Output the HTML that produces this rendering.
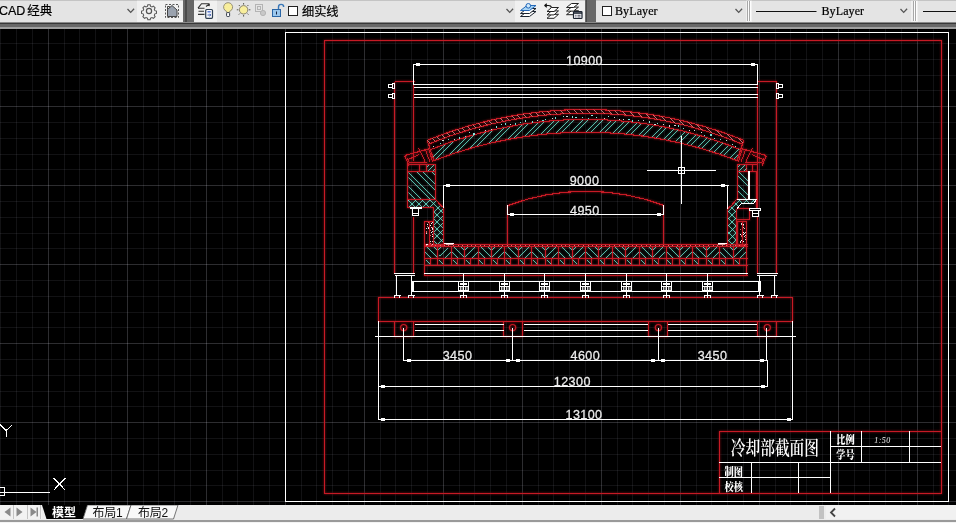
<!DOCTYPE html>
<html lang="zh"><head><meta charset="utf-8"><title>AutoCAD</title>
<style>
html,body{margin:0;padding:0;background:#000;}
body{width:956px;height:523px;position:relative;overflow:hidden;font-family:"Liberation Sans","Noto Sans CJK SC",sans-serif;font-size:12px;color:#111;}
#top{will-change:transform;position:absolute;left:0;top:0;width:956px;height:29px;background:#686868;}
#top .band1{position:absolute;left:0;top:22px;width:100%;height:1px;background:#383838;border-top:0.500px solid #8a8a8a;margin-top:-0.500px}
.gl{position:absolute;top:0;width:1.500px;height:22px;background:#4a4a4a;}
#top .band2{position:absolute;left:0;top:27px;width:100%;height:2px;background:#a0a0a0;}
.tb{position:absolute;top:0;height:22px;background:#f0f0f0;border-top:1px solid #d0d0d0;box-sizing:border-box;}
.combo{position:absolute;top:0;height:22px;background:#e4e4e4;box-sizing:border-box;border-top:1px solid #c4c4c4;}
.combo span{position:absolute;top:2px;white-space:nowrap;line-height:16px;color:#000;-webkit-text-stroke:0.2px #000;}
.mono{font-family:"Liberation Serif","Noto Serif CJK SC",serif;font-size:12px;letter-spacing:0.1px;color:#000;-webkit-text-stroke:0.25px #000;}
.chev{position:absolute;top:7px;width:8px;height:6px;}
svg.ic{position:absolute;top:0;left:0;}
#cv{position:absolute;left:0;top:0;will-change:transform;}
#cv text{font-family:"Liberation Sans",sans-serif;letter-spacing:0.4px;}
#bot{will-change:transform;position:absolute;left:0;top:505px;width:956px;height:18px;background:#ececec;}
#bot .ln{position:absolute;left:0;top:14.500px;width:100%;height:2px;background:#9a9a9a;}
#bot .ln2{position:absolute;left:0;top:16.500px;width:100%;height:2px;background:#f4f4f4;}
.tab{position:absolute;top:1px;height:14px;font-size:12px;line-height:14px;white-space:nowrap;}
</style></head><body>
<svg id="cv" width="956" height="523" viewBox="0 0 956 523" shape-rendering="crispEdges">
<defs><filter id="bl" x="0" y="0" width="100%" height="100%" filterUnits="userSpaceOnUse" color-interpolation-filters="sRGB"><feGaussianBlur in="SourceGraphic" stdDeviation="0.85" result="b"/><feColorMatrix in="b" type="matrix" values="0.75 0 0 0 0  0 0.55 0 0 0  0 0 0.55 0 0  0 0 0 1.15 0" result="b2"/><feMerge><feMergeNode in="b2"/><feMergeNode in="SourceGraphic"/></feMerge></filter></defs>
<rect x="0" y="29" width="956" height="476" fill="#000"/>
<rect x="0" y="29" width="1" height="476" fill="rgba(235,235,255,0.078)"/>
<rect x="16" y="29" width="1" height="476" fill="rgba(235,235,255,0.078)"/>
<rect x="32" y="29" width="1" height="476" fill="rgba(235,235,255,0.078)"/>
<rect x="48" y="29" width="1" height="476" fill="rgba(240,240,255,0.19)"/>
<rect x="64" y="29" width="1" height="476" fill="rgba(235,235,255,0.078)"/>
<rect x="79" y="29" width="1" height="476" fill="rgba(235,235,255,0.078)"/>
<rect x="95" y="29" width="1" height="476" fill="rgba(235,235,255,0.078)"/>
<rect x="111" y="29" width="1" height="476" fill="rgba(235,235,255,0.078)"/>
<rect x="127" y="29" width="1" height="476" fill="rgba(240,240,255,0.19)"/>
<rect x="143" y="29" width="1" height="476" fill="rgba(235,235,255,0.078)"/>
<rect x="158" y="29" width="1" height="476" fill="rgba(235,235,255,0.078)"/>
<rect x="174" y="29" width="1" height="476" fill="rgba(235,235,255,0.078)"/>
<rect x="190" y="29" width="1" height="476" fill="rgba(235,235,255,0.078)"/>
<rect x="206" y="29" width="1" height="476" fill="rgba(240,240,255,0.19)"/>
<rect x="222" y="29" width="1" height="476" fill="rgba(235,235,255,0.078)"/>
<rect x="237" y="29" width="1" height="476" fill="rgba(235,235,255,0.078)"/>
<rect x="253" y="29" width="1" height="476" fill="rgba(235,235,255,0.078)"/>
<rect x="269" y="29" width="1" height="476" fill="rgba(235,235,255,0.078)"/>
<rect x="285" y="29" width="1" height="476" fill="rgba(240,240,255,0.19)"/>
<rect x="301" y="29" width="1" height="476" fill="rgba(235,235,255,0.078)"/>
<rect x="316" y="29" width="1" height="476" fill="rgba(235,235,255,0.078)"/>
<rect x="332" y="29" width="1" height="476" fill="rgba(235,235,255,0.078)"/>
<rect x="348" y="29" width="1" height="476" fill="rgba(235,235,255,0.078)"/>
<rect x="364" y="29" width="1" height="476" fill="rgba(240,240,255,0.19)"/>
<rect x="380" y="29" width="1" height="476" fill="rgba(235,235,255,0.078)"/>
<rect x="395" y="29" width="1" height="476" fill="rgba(235,235,255,0.078)"/>
<rect x="411" y="29" width="1" height="476" fill="rgba(235,235,255,0.078)"/>
<rect x="427" y="29" width="1" height="476" fill="rgba(235,235,255,0.078)"/>
<rect x="443" y="29" width="1" height="476" fill="rgba(240,240,255,0.19)"/>
<rect x="459" y="29" width="1" height="476" fill="rgba(235,235,255,0.078)"/>
<rect x="474" y="29" width="1" height="476" fill="rgba(235,235,255,0.078)"/>
<rect x="490" y="29" width="1" height="476" fill="rgba(235,235,255,0.078)"/>
<rect x="506" y="29" width="1" height="476" fill="rgba(235,235,255,0.078)"/>
<rect x="522" y="29" width="1" height="476" fill="rgba(240,240,255,0.19)"/>
<rect x="538" y="29" width="1" height="476" fill="rgba(235,235,255,0.078)"/>
<rect x="553" y="29" width="1" height="476" fill="rgba(235,235,255,0.078)"/>
<rect x="569" y="29" width="1" height="476" fill="rgba(235,235,255,0.078)"/>
<rect x="585" y="29" width="1" height="476" fill="rgba(235,235,255,0.078)"/>
<rect x="601" y="29" width="1" height="476" fill="rgba(240,240,255,0.19)"/>
<rect x="617" y="29" width="1" height="476" fill="rgba(235,235,255,0.078)"/>
<rect x="632" y="29" width="1" height="476" fill="rgba(235,235,255,0.078)"/>
<rect x="648" y="29" width="1" height="476" fill="rgba(235,235,255,0.078)"/>
<rect x="664" y="29" width="1" height="476" fill="rgba(235,235,255,0.078)"/>
<rect x="680" y="29" width="1" height="476" fill="rgba(240,240,255,0.19)"/>
<rect x="696" y="29" width="1" height="476" fill="rgba(235,235,255,0.078)"/>
<rect x="711" y="29" width="1" height="476" fill="rgba(235,235,255,0.078)"/>
<rect x="727" y="29" width="1" height="476" fill="rgba(235,235,255,0.078)"/>
<rect x="743" y="29" width="1" height="476" fill="rgba(235,235,255,0.078)"/>
<rect x="759" y="29" width="1" height="476" fill="rgba(240,240,255,0.19)"/>
<rect x="775" y="29" width="1" height="476" fill="rgba(235,235,255,0.078)"/>
<rect x="790" y="29" width="1" height="476" fill="rgba(235,235,255,0.078)"/>
<rect x="806" y="29" width="1" height="476" fill="rgba(235,235,255,0.078)"/>
<rect x="822" y="29" width="1" height="476" fill="rgba(235,235,255,0.078)"/>
<rect x="838" y="29" width="1" height="476" fill="rgba(240,240,255,0.19)"/>
<rect x="854" y="29" width="1" height="476" fill="rgba(235,235,255,0.078)"/>
<rect x="869" y="29" width="1" height="476" fill="rgba(235,235,255,0.078)"/>
<rect x="885" y="29" width="1" height="476" fill="rgba(235,235,255,0.078)"/>
<rect x="901" y="29" width="1" height="476" fill="rgba(235,235,255,0.078)"/>
<rect x="917" y="29" width="1" height="476" fill="rgba(240,240,255,0.19)"/>
<rect x="933" y="29" width="1" height="476" fill="rgba(235,235,255,0.078)"/>
<rect x="948" y="29" width="1" height="476" fill="rgba(235,235,255,0.078)"/>
<rect x="0" y="43" width="956" height="1" fill="rgba(235,235,255,0.078)"/>
<rect x="0" y="59" width="956" height="1" fill="rgba(235,235,255,0.078)"/>
<rect x="0" y="75" width="956" height="1" fill="rgba(235,235,255,0.078)"/>
<rect x="0" y="90" width="956" height="1" fill="rgba(235,235,255,0.078)"/>
<rect x="0" y="106" width="956" height="1" fill="rgba(240,240,255,0.19)"/>
<rect x="0" y="122" width="956" height="1" fill="rgba(235,235,255,0.078)"/>
<rect x="0" y="138" width="956" height="1" fill="rgba(235,235,255,0.078)"/>
<rect x="0" y="154" width="956" height="1" fill="rgba(235,235,255,0.078)"/>
<rect x="0" y="169" width="956" height="1" fill="rgba(235,235,255,0.078)"/>
<rect x="0" y="185" width="956" height="1" fill="rgba(240,240,255,0.19)"/>
<rect x="0" y="201" width="956" height="1" fill="rgba(235,235,255,0.078)"/>
<rect x="0" y="217" width="956" height="1" fill="rgba(235,235,255,0.078)"/>
<rect x="0" y="233" width="956" height="1" fill="rgba(235,235,255,0.078)"/>
<rect x="0" y="248" width="956" height="1" fill="rgba(235,235,255,0.078)"/>
<rect x="0" y="264" width="956" height="1" fill="rgba(240,240,255,0.19)"/>
<rect x="0" y="280" width="956" height="1" fill="rgba(235,235,255,0.078)"/>
<rect x="0" y="296" width="956" height="1" fill="rgba(235,235,255,0.078)"/>
<rect x="0" y="312" width="956" height="1" fill="rgba(235,235,255,0.078)"/>
<rect x="0" y="327" width="956" height="1" fill="rgba(235,235,255,0.078)"/>
<rect x="0" y="343" width="956" height="1" fill="rgba(240,240,255,0.19)"/>
<rect x="0" y="359" width="956" height="1" fill="rgba(235,235,255,0.078)"/>
<rect x="0" y="375" width="956" height="1" fill="rgba(235,235,255,0.078)"/>
<rect x="0" y="391" width="956" height="1" fill="rgba(235,235,255,0.078)"/>
<rect x="0" y="406" width="956" height="1" fill="rgba(235,235,255,0.078)"/>
<rect x="0" y="422" width="956" height="1" fill="rgba(240,240,255,0.19)"/>
<rect x="0" y="438" width="956" height="1" fill="rgba(235,235,255,0.078)"/>
<rect x="0" y="454" width="956" height="1" fill="rgba(235,235,255,0.078)"/>
<rect x="0" y="470" width="956" height="1" fill="rgba(235,235,255,0.078)"/>
<rect x="0" y="485" width="956" height="1" fill="rgba(235,235,255,0.078)"/>
<rect x="0" y="501" width="956" height="1" fill="rgba(240,240,255,0.19)"/>
<g filter="url(#bl)">
<rect x="324.5" y="40.5" width="617.0" height="453.0" stroke="#c61a25" fill="none" stroke-width="1"/>
<line x1="394.50" y1="81.50" x2="394.50" y2="273.50" stroke="#c61a25" stroke-width="1" />
<line x1="413.50" y1="84.00" x2="413.50" y2="161.00" stroke="#c61a25" stroke-width="1" />
<line x1="413.50" y1="216.50" x2="413.50" y2="273.50" stroke="#c61a25" stroke-width="1" />
<line x1="394.60" y1="81.50" x2="414.60" y2="81.50" stroke="#c61a25" stroke-width="1" />
<line x1="776.50" y1="81.50" x2="776.50" y2="273.50" stroke="#c61a25" stroke-width="1" />
<line x1="757.50" y1="84.00" x2="757.50" y2="161.00" stroke="#c61a25" stroke-width="1" />
<line x1="757.50" y1="216.50" x2="757.50" y2="273.50" stroke="#c61a25" stroke-width="1" />
<line x1="757.40" y1="81.50" x2="777.40" y2="81.50" stroke="#c61a25" stroke-width="1" />
<g clip-path="url(#ca)" stroke="#69e8d4" stroke-width="0.78"><line x1="410.5" y1="170" x2="480.5" y2="100"/><line x1="419.8" y1="170" x2="489.8" y2="100"/><line x1="424.7" y1="170" x2="494.7" y2="100"/><line x1="434.0" y1="170" x2="504.0" y2="100"/><line x1="438.9" y1="170" x2="508.9" y2="100"/><line x1="448.2" y1="170" x2="518.2" y2="100"/><line x1="453.1" y1="170" x2="523.1" y2="100"/><line x1="462.4" y1="170" x2="532.4" y2="100"/><line x1="467.3" y1="170" x2="537.3" y2="100"/><line x1="476.6" y1="170" x2="546.6" y2="100"/><line x1="481.5" y1="170" x2="551.5" y2="100"/><line x1="490.8" y1="170" x2="560.8" y2="100"/><line x1="495.7" y1="170" x2="565.7" y2="100"/><line x1="505.0" y1="170" x2="575.0" y2="100"/><line x1="509.9" y1="170" x2="579.9" y2="100"/><line x1="519.2" y1="170" x2="589.2" y2="100"/><line x1="524.1" y1="170" x2="594.1" y2="100"/><line x1="533.4" y1="170" x2="603.4" y2="100"/><line x1="538.3" y1="170" x2="608.3" y2="100"/><line x1="547.6" y1="170" x2="617.6" y2="100"/><line x1="552.5" y1="170" x2="622.5" y2="100"/><line x1="561.8" y1="170" x2="631.8" y2="100"/><line x1="566.7" y1="170" x2="636.7" y2="100"/><line x1="576.0" y1="170" x2="646.0" y2="100"/><line x1="580.9" y1="170" x2="650.9" y2="100"/><line x1="590.2" y1="170" x2="660.2" y2="100"/><line x1="595.1" y1="170" x2="665.1" y2="100"/><line x1="604.4" y1="170" x2="674.4" y2="100"/><line x1="609.3" y1="170" x2="679.3" y2="100"/><line x1="618.6" y1="170" x2="688.6" y2="100"/><line x1="623.5" y1="170" x2="693.5" y2="100"/><line x1="632.8" y1="170" x2="702.8" y2="100"/><line x1="637.7" y1="170" x2="707.7" y2="100"/><line x1="647.0" y1="170" x2="717.0" y2="100"/><line x1="651.9" y1="170" x2="721.9" y2="100"/><line x1="661.2" y1="170" x2="731.2" y2="100"/><line x1="666.1" y1="170" x2="736.1" y2="100"/><line x1="675.4" y1="170" x2="745.4" y2="100"/><line x1="680.3" y1="170" x2="750.3" y2="100"/><line x1="689.6" y1="170" x2="759.6" y2="100"/><line x1="694.5" y1="170" x2="764.5" y2="100"/><line x1="703.8" y1="170" x2="773.8" y2="100"/><line x1="708.7" y1="170" x2="778.7" y2="100"/><line x1="718.0" y1="170" x2="788.0" y2="100"/><line x1="722.9" y1="170" x2="792.9" y2="100"/><line x1="732.2" y1="170" x2="802.2" y2="100"/><line x1="737.1" y1="170" x2="807.1" y2="100"/><line x1="746.4" y1="170" x2="816.4" y2="100"/><line x1="751.3" y1="170" x2="821.3" y2="100"/></g>
<path d="M427.10 140.30 A422.7 422.7 0 0 1 743.90 140.30" stroke="#c61a25" fill="none" stroke-width="1.1"/>
<path d="M428.50 144.10 A414.3 414.3 0 0 1 742.50 144.10" stroke="#c61a25" fill="none" stroke-width="1.1"/>
<path d="M430.30 149.70 A412.6 412.6 0 0 1 740.70 149.70" stroke="#c61a25" fill="none" stroke-width="1.1"/>
<path d="M434.00 160.60 A418.3 418.3 0 0 1 737.00 160.60" stroke="#c61a25" fill="none" stroke-width="1.1"/>
<path d="M427.10 140.30 L428.50 144.10 L430.30 149.70 L434.00 160.60" stroke="#c61a25" fill="none" stroke-width="1.1"/>
<path d="M743.90 140.30 L742.50 144.10 L740.70 149.70 L737.00 160.60" stroke="#c61a25" fill="none" stroke-width="1.1"/>
<path d="M404.60 155.60 L430.00 148.40" stroke="#c61a25" fill="none" stroke-width="1.1"/>
<path d="M404.60 155.60 L408.90 165.60" stroke="#c61a25" fill="none" stroke-width="1.1"/>
<path d="M407.00 158.20 L409.40 162.70" stroke="#c61a25" fill="none" stroke-width="1"/>
<path d="M408.30 159.50 L419.00 154.50" stroke="#c61a25" fill="none" stroke-width="1"/>
<line x1="409.40" y1="162.50" x2="426.50" y2="162.50" stroke="#c61a25" stroke-width="1" />
<line x1="408.00" y1="164.50" x2="436.00" y2="164.50" stroke="#c61a25" stroke-width="1" />
<path d="M419.40 149.50 L425.00 161.50" stroke="#c61a25" fill="none" stroke-width="1"/>
<path d="M425.60 150.30 L430.00 162.00" stroke="#c61a25" fill="none" stroke-width="1"/>
<path d="M428.50 148.00 L432.80 162.40" stroke="#c61a25" fill="none" stroke-width="1"/>
<path d="M418.40 147.60 L419.40 149.60" stroke="#c61a25" fill="none" stroke-width="1"/>
<rect x="407.5" y="164.5" width="28.0" height="7.0" stroke="#c61a25" fill="none" stroke-width="1"/>
<line x1="419.50" y1="164.50" x2="419.50" y2="171.30" stroke="#c61a25" stroke-width="1" />
<line x1="426.50" y1="164.50" x2="426.50" y2="171.30" stroke="#c61a25" stroke-width="1" />
<g clip-path="url(#hl1)" stroke="#69e8d4" stroke-width="0.78"><line x1="430.0" y1="164.0" x2="422.0" y2="172.0"/><line x1="435.0" y1="164.0" x2="427.0" y2="172.0"/><line x1="440.0" y1="164.0" x2="432.0" y2="172.0"/><line x1="445.0" y1="164.0" x2="437.0" y2="172.0"/></g>
<g clip-path="url(#hl2)" stroke="#69e8d4" stroke-width="0.78"><line x1="387.4" y1="171.0" x2="416.4" y2="200.0"/><line x1="392.7" y1="171.0" x2="421.7" y2="200.0"/><line x1="401.8" y1="171.0" x2="430.8" y2="200.0"/><line x1="407.1" y1="171.0" x2="436.1" y2="200.0"/><line x1="416.2" y1="171.0" x2="445.2" y2="200.0"/><line x1="421.5" y1="171.0" x2="450.5" y2="200.0"/><line x1="430.6" y1="171.0" x2="459.6" y2="200.0"/><line x1="435.9" y1="171.0" x2="464.9" y2="200.0"/><line x1="445.0" y1="171.0" x2="474.0" y2="200.0"/></g>
<rect x="407.5" y="171.5" width="28.0" height="28.0" stroke="#c61a25" fill="none" stroke-width="1"/>
<g clip-path="url(#hl3)" stroke="#69e8d4" stroke-width="0.78"><line x1="410.4" y1="198.1" x2="361.9" y2="246.6"/><line x1="417.6" y1="198.1" x2="369.1" y2="246.6"/><line x1="424.8" y1="198.1" x2="376.3" y2="246.6"/><line x1="432.0" y1="198.1" x2="383.5" y2="246.6"/><line x1="439.2" y1="198.1" x2="390.7" y2="246.6"/><line x1="446.4" y1="198.1" x2="397.9" y2="246.6"/><line x1="453.6" y1="198.1" x2="405.1" y2="246.6"/><line x1="460.8" y1="198.1" x2="412.3" y2="246.6"/><line x1="468.0" y1="198.1" x2="419.5" y2="246.6"/><line x1="475.2" y1="198.1" x2="426.7" y2="246.6"/><line x1="482.4" y1="198.1" x2="433.9" y2="246.6"/><line x1="489.6" y1="198.1" x2="441.1" y2="246.6"/><line x1="496.8" y1="198.1" x2="448.3" y2="246.6"/><line x1="362.8" y1="198.1" x2="411.3" y2="246.6"/><line x1="370.0" y1="198.1" x2="418.5" y2="246.6"/><line x1="377.2" y1="198.1" x2="425.7" y2="246.6"/><line x1="384.4" y1="198.1" x2="432.9" y2="246.6"/><line x1="391.6" y1="198.1" x2="440.1" y2="246.6"/><line x1="398.8" y1="198.1" x2="447.3" y2="246.6"/><line x1="406.0" y1="198.1" x2="454.5" y2="246.6"/><line x1="413.2" y1="198.1" x2="461.7" y2="246.6"/><line x1="420.4" y1="198.1" x2="468.9" y2="246.6"/><line x1="427.6" y1="198.1" x2="476.1" y2="246.6"/><line x1="434.8" y1="198.1" x2="483.3" y2="246.6"/><line x1="442.0" y1="198.1" x2="490.5" y2="246.6"/><line x1="449.2" y1="198.1" x2="497.7" y2="246.6"/></g>
<path d="M407.80 199.10 L435.40 199.10 L439.00 203.50 L443.30 207.50 L443.30 245.60 L433.80 245.60 L433.80 207.20 L407.80 207.20 Z" stroke="#c61a25" fill="none" stroke-width="1"/>
<rect x="424.5" y="221.5" width="9.0" height="24.0" stroke="#c61a25" fill="none" stroke-width="1"/>
<line x1="429.50" y1="221.50" x2="429.50" y2="245.60" stroke="#c61a25" stroke-width="1" />
<path d="M766.40 155.60 L741.00 148.40" stroke="#c61a25" fill="none" stroke-width="1.1"/>
<path d="M766.40 155.60 L762.10 165.60" stroke="#c61a25" fill="none" stroke-width="1.1"/>
<path d="M764.00 158.20 L761.60 162.70" stroke="#c61a25" fill="none" stroke-width="1"/>
<path d="M762.70 159.50 L752.00 154.50" stroke="#c61a25" fill="none" stroke-width="1"/>
<line x1="744.50" y1="162.50" x2="761.60" y2="162.50" stroke="#c61a25" stroke-width="1" />
<line x1="737.30" y1="164.50" x2="758.00" y2="164.50" stroke="#c61a25" stroke-width="1" />
<path d="M751.60 149.50 L746.00 161.50" stroke="#c61a25" fill="none" stroke-width="1"/>
<path d="M745.40 150.30 L741.00 162.00" stroke="#c61a25" fill="none" stroke-width="1"/>
<path d="M742.50 148.00 L738.20 162.40" stroke="#c61a25" fill="none" stroke-width="1"/>
<path d="M752.60 147.60 L751.60 149.60" stroke="#c61a25" fill="none" stroke-width="1"/>
<rect x="737.5" y="164.5" width="20.0" height="7.0" stroke="#c61a25" fill="none" stroke-width="1"/>
<line x1="746.50" y1="164.50" x2="746.50" y2="171.30" stroke="#c61a25" stroke-width="1" />
<line x1="752.50" y1="164.50" x2="752.50" y2="171.30" stroke="#c61a25" stroke-width="1" />
<g clip-path="url(#hr1)" stroke="#69e8d4" stroke-width="0.78"><line x1="741.0" y1="164.0" x2="733.0" y2="172.0"/><line x1="746.0" y1="164.0" x2="738.0" y2="172.0"/><line x1="751.0" y1="164.0" x2="743.0" y2="172.0"/><line x1="756.0" y1="164.0" x2="748.0" y2="172.0"/></g>
<g clip-path="url(#hr2)" stroke="#69e8d4" stroke-width="0.78"><line x1="709.4" y1="171.0" x2="738.4" y2="200.0"/><line x1="718.5" y1="171.0" x2="747.5" y2="200.0"/><line x1="723.8" y1="171.0" x2="752.8" y2="200.0"/><line x1="732.9" y1="171.0" x2="761.9" y2="200.0"/><line x1="738.2" y1="171.0" x2="767.2" y2="200.0"/><line x1="747.3" y1="171.0" x2="776.3" y2="200.0"/><line x1="752.6" y1="171.0" x2="781.6" y2="200.0"/><line x1="761.7" y1="171.0" x2="790.7" y2="200.0"/></g>
<rect x="737.5" y="171.5" width="11.0" height="28.0" stroke="#c61a25" fill="none" stroke-width="1"/>
<line x1="756.50" y1="171.30" x2="756.50" y2="208.00" stroke="#c61a25" stroke-width="1" />
<line x1="757.50" y1="161.00" x2="757.50" y2="208.00" stroke="#c61a25" stroke-width="1" />
<g clip-path="url(#hr3)" stroke="#69e8d4" stroke-width="0.78"><line x1="727.5" y1="198.1" x2="679.0" y2="246.6"/><line x1="734.7" y1="198.1" x2="686.2" y2="246.6"/><line x1="741.9" y1="198.1" x2="693.4" y2="246.6"/><line x1="749.1" y1="198.1" x2="700.6" y2="246.6"/><line x1="756.3" y1="198.1" x2="707.8" y2="246.6"/><line x1="763.5" y1="198.1" x2="715.0" y2="246.6"/><line x1="770.7" y1="198.1" x2="722.2" y2="246.6"/><line x1="777.9" y1="198.1" x2="729.4" y2="246.6"/><line x1="785.1" y1="198.1" x2="736.6" y2="246.6"/><line x1="792.3" y1="198.1" x2="743.8" y2="246.6"/><line x1="799.5" y1="198.1" x2="751.0" y2="246.6"/><line x1="806.7" y1="198.1" x2="758.2" y2="246.6"/><line x1="679.3" y1="198.1" x2="727.8" y2="246.6"/><line x1="686.5" y1="198.1" x2="735.0" y2="246.6"/><line x1="693.7" y1="198.1" x2="742.2" y2="246.6"/><line x1="700.9" y1="198.1" x2="749.4" y2="246.6"/><line x1="708.1" y1="198.1" x2="756.6" y2="246.6"/><line x1="715.3" y1="198.1" x2="763.8" y2="246.6"/><line x1="722.5" y1="198.1" x2="771.0" y2="246.6"/><line x1="729.7" y1="198.1" x2="778.2" y2="246.6"/><line x1="736.9" y1="198.1" x2="785.4" y2="246.6"/><line x1="744.1" y1="198.1" x2="792.6" y2="246.6"/><line x1="751.3" y1="198.1" x2="799.8" y2="246.6"/><line x1="758.5" y1="198.1" x2="807.0" y2="246.6"/></g>
<path d="M736.80 199.10 L732.00 204.90 L727.70 208.70" stroke="#c61a25" fill="none" stroke-width="1"/>
<line x1="727.50" y1="208.70" x2="727.50" y2="245.60" stroke="#c61a25" stroke-width="1" />
<line x1="736.50" y1="208.70" x2="736.50" y2="245.60" stroke="#c61a25" stroke-width="1" />
<line x1="737.00" y1="208.50" x2="750.00" y2="208.50" stroke="#c61a25" stroke-width="1" />
<line x1="749.50" y1="208.70" x2="749.50" y2="219.50" stroke="#c61a25" stroke-width="1" />
<line x1="737.00" y1="219.50" x2="750.00" y2="219.50" stroke="#c61a25" stroke-width="1" />
<rect x="737.5" y="221.5" width="9.0" height="24.0" stroke="#c61a25" fill="none" stroke-width="1"/>
<line x1="742.50" y1="221.00" x2="742.50" y2="245.60" stroke="#c61a25" stroke-width="1" />
<line x1="507.50" y1="205.40" x2="507.50" y2="246.00" stroke="#c61a25" stroke-width="1" />
<line x1="663.50" y1="205.40" x2="663.50" y2="246.00" stroke="#c61a25" stroke-width="1" />
<path d="M508.3 205.4 A221.1 221.1 0 0 1 663.8 205.4" stroke="#c61a25" fill="none" stroke-width="1.1"/>
<line x1="424.40" y1="244.50" x2="747.60" y2="244.50" stroke="#c61a25" stroke-width="1" />
<line x1="424.40" y1="246.50" x2="747.60" y2="246.50" stroke="#c61a25" stroke-width="1" />
<line x1="424.40" y1="258.50" x2="747.60" y2="258.50" stroke="#c61a25" stroke-width="1" />
<line x1="424.40" y1="265.50" x2="747.60" y2="265.50" stroke="#c61a25" stroke-width="1" />
<line x1="424.50" y1="244.50" x2="424.50" y2="275.50" stroke="#c61a25" stroke-width="1" />
<line x1="746.50" y1="244.50" x2="746.50" y2="275.50" stroke="#c61a25" stroke-width="1" />
<line x1="424.40" y1="275.50" x2="747.60" y2="275.50" stroke="#c61a25" stroke-width="1" />
<line x1="430.50" y1="258.40" x2="430.50" y2="265.10" stroke="#c61a25" stroke-width="1" />
<line x1="437.50" y1="246.50" x2="437.50" y2="265.10" stroke="#c61a25" stroke-width="1" />
<line x1="443.50" y1="258.40" x2="443.50" y2="265.10" stroke="#c61a25" stroke-width="1" />
<line x1="451.50" y1="246.50" x2="451.50" y2="265.10" stroke="#c61a25" stroke-width="1" />
<line x1="457.50" y1="258.40" x2="457.50" y2="265.10" stroke="#c61a25" stroke-width="1" />
<line x1="464.50" y1="246.50" x2="464.50" y2="265.10" stroke="#c61a25" stroke-width="1" />
<line x1="470.50" y1="258.40" x2="470.50" y2="265.10" stroke="#c61a25" stroke-width="1" />
<line x1="478.50" y1="246.50" x2="478.50" y2="265.10" stroke="#c61a25" stroke-width="1" />
<line x1="484.50" y1="258.40" x2="484.50" y2="265.10" stroke="#c61a25" stroke-width="1" />
<line x1="491.50" y1="246.50" x2="491.50" y2="265.10" stroke="#c61a25" stroke-width="1" />
<line x1="497.50" y1="258.40" x2="497.50" y2="265.10" stroke="#c61a25" stroke-width="1" />
<line x1="504.50" y1="246.50" x2="504.50" y2="265.10" stroke="#c61a25" stroke-width="1" />
<line x1="510.50" y1="258.40" x2="510.50" y2="265.10" stroke="#c61a25" stroke-width="1" />
<line x1="518.50" y1="246.50" x2="518.50" y2="265.10" stroke="#c61a25" stroke-width="1" />
<line x1="524.50" y1="258.40" x2="524.50" y2="265.10" stroke="#c61a25" stroke-width="1" />
<line x1="531.50" y1="246.50" x2="531.50" y2="265.10" stroke="#c61a25" stroke-width="1" />
<line x1="537.50" y1="258.40" x2="537.50" y2="265.10" stroke="#c61a25" stroke-width="1" />
<line x1="545.50" y1="246.50" x2="545.50" y2="265.10" stroke="#c61a25" stroke-width="1" />
<line x1="551.50" y1="258.40" x2="551.50" y2="265.10" stroke="#c61a25" stroke-width="1" />
<line x1="558.50" y1="246.50" x2="558.50" y2="265.10" stroke="#c61a25" stroke-width="1" />
<line x1="564.50" y1="258.40" x2="564.50" y2="265.10" stroke="#c61a25" stroke-width="1" />
<line x1="572.50" y1="246.50" x2="572.50" y2="265.10" stroke="#c61a25" stroke-width="1" />
<line x1="578.50" y1="258.40" x2="578.50" y2="265.10" stroke="#c61a25" stroke-width="1" />
<line x1="585.50" y1="246.50" x2="585.50" y2="265.10" stroke="#c61a25" stroke-width="1" />
<line x1="591.50" y1="258.40" x2="591.50" y2="265.10" stroke="#c61a25" stroke-width="1" />
<line x1="598.50" y1="246.50" x2="598.50" y2="265.10" stroke="#c61a25" stroke-width="1" />
<line x1="604.50" y1="258.40" x2="604.50" y2="265.10" stroke="#c61a25" stroke-width="1" />
<line x1="612.50" y1="246.50" x2="612.50" y2="265.10" stroke="#c61a25" stroke-width="1" />
<line x1="618.50" y1="258.40" x2="618.50" y2="265.10" stroke="#c61a25" stroke-width="1" />
<line x1="625.50" y1="246.50" x2="625.50" y2="265.10" stroke="#c61a25" stroke-width="1" />
<line x1="631.50" y1="258.40" x2="631.50" y2="265.10" stroke="#c61a25" stroke-width="1" />
<line x1="639.50" y1="246.50" x2="639.50" y2="265.10" stroke="#c61a25" stroke-width="1" />
<line x1="645.50" y1="258.40" x2="645.50" y2="265.10" stroke="#c61a25" stroke-width="1" />
<line x1="652.50" y1="246.50" x2="652.50" y2="265.10" stroke="#c61a25" stroke-width="1" />
<line x1="658.50" y1="258.40" x2="658.50" y2="265.10" stroke="#c61a25" stroke-width="1" />
<line x1="666.50" y1="246.50" x2="666.50" y2="265.10" stroke="#c61a25" stroke-width="1" />
<line x1="672.50" y1="258.40" x2="672.50" y2="265.10" stroke="#c61a25" stroke-width="1" />
<line x1="679.50" y1="246.50" x2="679.50" y2="265.10" stroke="#c61a25" stroke-width="1" />
<line x1="685.50" y1="258.40" x2="685.50" y2="265.10" stroke="#c61a25" stroke-width="1" />
<line x1="692.50" y1="246.50" x2="692.50" y2="265.10" stroke="#c61a25" stroke-width="1" />
<line x1="698.50" y1="258.40" x2="698.50" y2="265.10" stroke="#c61a25" stroke-width="1" />
<line x1="706.50" y1="246.50" x2="706.50" y2="265.10" stroke="#c61a25" stroke-width="1" />
<line x1="712.50" y1="258.40" x2="712.50" y2="265.10" stroke="#c61a25" stroke-width="1" />
<line x1="719.50" y1="246.50" x2="719.50" y2="265.10" stroke="#c61a25" stroke-width="1" />
<line x1="725.50" y1="258.40" x2="725.50" y2="265.10" stroke="#c61a25" stroke-width="1" />
<line x1="733.50" y1="246.50" x2="733.50" y2="265.10" stroke="#c61a25" stroke-width="1" />
<line x1="739.50" y1="258.40" x2="739.50" y2="265.10" stroke="#c61a25" stroke-width="1" />
<g stroke="#69e8d4" stroke-width="0.78"><line x1="425.2" y1="252.3" x2="430.9" y2="258.0"/><line x1="427.3" y1="247.2" x2="437.2" y2="257.1"/><line x1="434.5" y1="247.2" x2="437.2" y2="249.9"/><line x1="425.6" y1="259.8" x2="429.3" y2="263.6"/><line x1="450.6" y1="252.1" x2="444.8" y2="258.0"/><line x1="448.4" y1="247.2" x2="438.6" y2="256.9"/><line x1="441.1" y1="247.2" x2="438.6" y2="249.7"/><line x1="439.0" y1="259.8" x2="442.7" y2="263.6"/><line x1="452.1" y1="252.3" x2="457.8" y2="258.0"/><line x1="454.1" y1="247.2" x2="464.1" y2="257.1"/><line x1="461.4" y1="247.2" x2="464.1" y2="249.9"/><line x1="452.4" y1="259.8" x2="456.1" y2="263.6"/><line x1="477.5" y1="252.1" x2="471.6" y2="258.0"/><line x1="475.2" y1="247.2" x2="465.5" y2="256.9"/><line x1="468.0" y1="247.2" x2="465.5" y2="249.7"/><line x1="465.9" y1="259.8" x2="469.6" y2="263.6"/><line x1="478.9" y1="252.3" x2="484.6" y2="258.0"/><line x1="481.0" y1="247.2" x2="490.9" y2="257.1"/><line x1="488.2" y1="247.2" x2="490.9" y2="249.9"/><line x1="479.3" y1="259.8" x2="483.0" y2="263.6"/><line x1="504.3" y1="252.1" x2="498.4" y2="258.0"/><line x1="502.1" y1="247.2" x2="492.3" y2="256.9"/><line x1="494.8" y1="247.2" x2="492.3" y2="249.7"/><line x1="492.7" y1="259.8" x2="496.4" y2="263.6"/><line x1="505.8" y1="252.3" x2="511.4" y2="258.0"/><line x1="507.8" y1="247.2" x2="517.8" y2="257.1"/><line x1="515.0" y1="247.2" x2="517.8" y2="249.9"/><line x1="506.1" y1="259.8" x2="509.8" y2="263.6"/><line x1="531.2" y1="252.1" x2="525.3" y2="258.0"/><line x1="528.9" y1="247.2" x2="519.2" y2="256.9"/><line x1="521.7" y1="247.2" x2="519.2" y2="249.7"/><line x1="519.6" y1="259.8" x2="523.3" y2="263.6"/><line x1="532.6" y1="252.3" x2="538.3" y2="258.0"/><line x1="534.7" y1="247.2" x2="544.6" y2="257.1"/><line x1="541.9" y1="247.2" x2="544.6" y2="249.9"/><line x1="533.0" y1="259.8" x2="536.7" y2="263.6"/><line x1="558.0" y1="252.1" x2="552.1" y2="258.0"/><line x1="555.8" y1="247.2" x2="546.0" y2="256.9"/><line x1="548.5" y1="247.2" x2="546.0" y2="249.7"/><line x1="546.4" y1="259.8" x2="550.1" y2="263.6"/><line x1="559.4" y1="252.3" x2="565.2" y2="258.0"/><line x1="561.5" y1="247.2" x2="571.5" y2="257.1"/><line x1="568.8" y1="247.2" x2="571.5" y2="249.9"/><line x1="559.9" y1="259.8" x2="563.5" y2="263.6"/><line x1="584.9" y1="252.1" x2="579.0" y2="258.0"/><line x1="582.6" y1="247.2" x2="572.9" y2="256.9"/><line x1="575.4" y1="247.2" x2="572.9" y2="249.7"/><line x1="573.3" y1="259.8" x2="577.0" y2="263.6"/><line x1="586.3" y1="252.3" x2="592.0" y2="258.0"/><line x1="588.4" y1="247.2" x2="598.3" y2="257.1"/><line x1="595.6" y1="247.2" x2="598.3" y2="249.9"/><line x1="586.7" y1="259.8" x2="590.4" y2="263.6"/><line x1="611.7" y1="252.1" x2="605.8" y2="258.0"/><line x1="609.4" y1="247.2" x2="599.7" y2="256.9"/><line x1="602.2" y1="247.2" x2="599.7" y2="249.7"/><line x1="600.1" y1="259.8" x2="603.8" y2="263.6"/><line x1="613.1" y1="252.3" x2="618.9" y2="258.0"/><line x1="615.2" y1="247.2" x2="625.2" y2="257.1"/><line x1="622.5" y1="247.2" x2="625.2" y2="249.9"/><line x1="613.6" y1="259.8" x2="617.2" y2="263.6"/><line x1="638.6" y1="252.1" x2="632.7" y2="258.0"/><line x1="636.3" y1="247.2" x2="626.6" y2="256.9"/><line x1="629.1" y1="247.2" x2="626.6" y2="249.7"/><line x1="627.0" y1="259.8" x2="630.7" y2="263.6"/><line x1="640.0" y1="252.3" x2="645.7" y2="258.0"/><line x1="642.1" y1="247.2" x2="652.0" y2="257.1"/><line x1="649.3" y1="247.2" x2="652.0" y2="249.9"/><line x1="640.4" y1="259.8" x2="644.1" y2="263.6"/><line x1="665.4" y1="252.1" x2="659.5" y2="258.0"/><line x1="663.1" y1="247.2" x2="653.4" y2="256.9"/><line x1="655.9" y1="247.2" x2="653.4" y2="249.7"/><line x1="653.8" y1="259.8" x2="657.5" y2="263.6"/><line x1="666.8" y1="252.3" x2="672.5" y2="258.0"/><line x1="668.9" y1="247.2" x2="678.9" y2="257.1"/><line x1="676.1" y1="247.2" x2="678.9" y2="249.9"/><line x1="667.2" y1="259.8" x2="670.9" y2="263.6"/><line x1="692.3" y1="252.1" x2="686.4" y2="258.0"/><line x1="690.0" y1="247.2" x2="680.3" y2="256.9"/><line x1="682.8" y1="247.2" x2="680.3" y2="249.7"/><line x1="680.7" y1="259.8" x2="684.4" y2="263.6"/><line x1="693.7" y1="252.3" x2="699.4" y2="258.0"/><line x1="695.8" y1="247.2" x2="705.7" y2="257.1"/><line x1="703.0" y1="247.2" x2="705.7" y2="249.9"/><line x1="694.1" y1="259.8" x2="697.8" y2="263.6"/><line x1="719.1" y1="252.1" x2="713.2" y2="258.0"/><line x1="716.9" y1="247.2" x2="707.1" y2="256.9"/><line x1="709.6" y1="247.2" x2="707.1" y2="249.7"/><line x1="707.5" y1="259.8" x2="711.2" y2="263.6"/><line x1="720.5" y1="252.3" x2="726.2" y2="258.0"/><line x1="722.6" y1="247.2" x2="732.6" y2="257.1"/><line x1="729.9" y1="247.2" x2="732.6" y2="249.9"/><line x1="721.0" y1="259.8" x2="724.6" y2="263.6"/><line x1="746.0" y1="252.1" x2="740.1" y2="258.0"/><line x1="743.7" y1="247.2" x2="734.0" y2="256.9"/><line x1="736.5" y1="247.2" x2="734.0" y2="249.7"/><line x1="734.4" y1="259.8" x2="738.1" y2="263.6"/></g>
<rect x="378.5" y="297.5" width="414.0" height="24.0" stroke="#c61a25" fill="none" stroke-width="1"/>
<rect x="394.5" y="321.5" width="19.0" height="15.0" stroke="#c61a25" fill="none" stroke-width="1"/>
<rect x="503.5" y="321.5" width="19.0" height="15.0" stroke="#c61a25" fill="none" stroke-width="1"/>
<rect x="648.5" y="321.5" width="19.0" height="15.0" stroke="#c61a25" fill="none" stroke-width="1"/>
<rect x="757.5" y="321.5" width="19.0" height="15.0" stroke="#c61a25" fill="none" stroke-width="1"/>
<circle cx="403.7" cy="327.6" r="3.1" stroke="#c61a25" fill="none" stroke-width="1.15" shape-rendering="geometricPrecision"/>
<circle cx="512.6" cy="327.6" r="3.1" stroke="#c61a25" fill="none" stroke-width="1.15" shape-rendering="geometricPrecision"/>
<circle cx="658.4" cy="327.6" r="3.1" stroke="#c61a25" fill="none" stroke-width="1.15" shape-rendering="geometricPrecision"/>
<circle cx="767.3" cy="327.6" r="3.1" stroke="#c61a25" fill="none" stroke-width="1.15" shape-rendering="geometricPrecision"/>
<rect x="719.5" y="431.5" width="222.0" height="62.0" stroke="#c61a25" fill="none" stroke-width="1"/>
</g>
<rect x="285.5" y="32.5" width="663.0" height="469.0" stroke="#ffffff" fill="none" stroke-width="1"/>
<line x1="413.60" y1="64.50" x2="757.90" y2="64.50" stroke="#ffffff" stroke-width="1" />
<line x1="413.50" y1="64.00" x2="413.50" y2="85.00" stroke="#ffffff" stroke-width="1" />
<line x1="757.50" y1="64.00" x2="757.50" y2="85.00" stroke="#ffffff" stroke-width="1" />
<rect x="416.0" y="63" width="4" height="3" fill="#fff"/>
<rect x="751.0" y="63" width="4" height="3" fill="#fff"/>
<line x1="413.60" y1="84.50" x2="757.90" y2="84.50" stroke="#ffffff" stroke-width="1" />
<line x1="413.60" y1="87.50" x2="757.90" y2="87.50" stroke="#ffffff" stroke-width="1" />
<line x1="413.60" y1="94.50" x2="757.90" y2="94.50" stroke="#ffffff" stroke-width="1" />
<line x1="413.60" y1="97.50" x2="757.90" y2="97.50" stroke="#ffffff" stroke-width="1" />
<text transform="translate(584.5 64.5) scale(1 1.08)" font-size="12.6" text-anchor="middle" fill="#ececec" stroke="#ececec" stroke-width="0.25">10900</text>
<rect x="388.5" y="84.5" width="4.0" height="3.0" stroke="#ffffff" fill="none" stroke-width="1"/>
<rect x="392.5" y="83.5" width="2.0" height="5.0" stroke="#ffffff" fill="none" stroke-width="1"/>
<rect x="388.5" y="94.5" width="4.0" height="3.0" stroke="#ffffff" fill="none" stroke-width="1"/>
<rect x="392.5" y="93.5" width="2.0" height="5.0" stroke="#ffffff" fill="none" stroke-width="1"/>
<line x1="394.10" y1="273.50" x2="415.10" y2="273.50" stroke="#ffffff" stroke-width="1" />
<line x1="394.60" y1="275.50" x2="414.60" y2="275.50" stroke="#ffffff" stroke-width="1" />
<line x1="396.50" y1="276.00" x2="396.50" y2="296.00" stroke="#ffffff" stroke-width="1" />
<line x1="411.50" y1="276.00" x2="411.50" y2="296.00" stroke="#ffffff" stroke-width="1" />
<line x1="394.20" y1="295.50" x2="400.70" y2="295.50" stroke="#ffffff" stroke-width="1" />
<line x1="394.50" y1="295.50" x2="394.50" y2="297.50" stroke="#ffffff" stroke-width="1" />
<line x1="399.50" y1="295.50" x2="399.50" y2="297.50" stroke="#ffffff" stroke-width="1" />
<line x1="408.20" y1="295.50" x2="414.80" y2="295.50" stroke="#ffffff" stroke-width="1" />
<line x1="408.50" y1="295.50" x2="408.50" y2="297.50" stroke="#ffffff" stroke-width="1" />
<line x1="413.50" y1="295.50" x2="413.50" y2="297.50" stroke="#ffffff" stroke-width="1" />
<rect x="778.5" y="84.5" width="4.0" height="3.0" stroke="#ffffff" fill="none" stroke-width="1"/>
<rect x="776.5" y="83.5" width="2.0" height="5.0" stroke="#ffffff" fill="none" stroke-width="1"/>
<rect x="778.5" y="94.5" width="4.0" height="3.0" stroke="#ffffff" fill="none" stroke-width="1"/>
<rect x="776.5" y="93.5" width="2.0" height="5.0" stroke="#ffffff" fill="none" stroke-width="1"/>
<line x1="756.90" y1="273.50" x2="777.90" y2="273.50" stroke="#ffffff" stroke-width="1" />
<line x1="757.40" y1="275.50" x2="777.40" y2="275.50" stroke="#ffffff" stroke-width="1" />
<line x1="774.50" y1="276.00" x2="774.50" y2="296.00" stroke="#ffffff" stroke-width="1" />
<line x1="759.50" y1="276.00" x2="759.50" y2="296.00" stroke="#ffffff" stroke-width="1" />
<line x1="771.30" y1="295.50" x2="777.80" y2="295.50" stroke="#ffffff" stroke-width="1" />
<line x1="771.50" y1="295.50" x2="771.50" y2="297.50" stroke="#ffffff" stroke-width="1" />
<line x1="776.50" y1="295.50" x2="776.50" y2="297.50" stroke="#ffffff" stroke-width="1" />
<line x1="757.20" y1="295.50" x2="763.80" y2="295.50" stroke="#ffffff" stroke-width="1" />
<line x1="757.50" y1="295.50" x2="757.50" y2="297.50" stroke="#ffffff" stroke-width="1" />
<line x1="762.50" y1="295.50" x2="762.50" y2="297.50" stroke="#ffffff" stroke-width="1" />
<clipPath id="ca"><path d="M430.30 149.70 A412.6 412.6 0 0 1 740.70 149.70 L737.00 160.60 A418.3 418.3 0 0 0 434.00 160.60 Z"/></clipPath>
<clipPath id="ct"><path d="M427.10 140.30 A422.7 422.7 0 0 1 743.90 140.30 L742.50 144.10 A414.3 414.3 0 0 0 428.50 144.10 Z"/></clipPath>
<g clip-path="url(#ct)" stroke="#e29090" stroke-width="0.78"><line x1="385.0" y1="105" x2="430.0" y2="150"/><line x1="391.8" y1="105" x2="436.8" y2="150"/><line x1="398.6" y1="105" x2="443.6" y2="150"/><line x1="405.4" y1="105" x2="450.4" y2="150"/><line x1="412.2" y1="105" x2="457.2" y2="150"/><line x1="419.0" y1="105" x2="464.0" y2="150"/><line x1="425.8" y1="105" x2="470.8" y2="150"/><line x1="432.6" y1="105" x2="477.6" y2="150"/><line x1="439.4" y1="105" x2="484.4" y2="150"/><line x1="446.2" y1="105" x2="491.2" y2="150"/><line x1="453.0" y1="105" x2="498.0" y2="150"/><line x1="459.8" y1="105" x2="504.8" y2="150"/><line x1="466.6" y1="105" x2="511.6" y2="150"/><line x1="473.4" y1="105" x2="518.4" y2="150"/><line x1="480.2" y1="105" x2="525.2" y2="150"/><line x1="487.0" y1="105" x2="532.0" y2="150"/><line x1="493.8" y1="105" x2="538.8" y2="150"/><line x1="500.6" y1="105" x2="545.6" y2="150"/><line x1="507.4" y1="105" x2="552.4" y2="150"/><line x1="514.2" y1="105" x2="559.2" y2="150"/><line x1="521.0" y1="105" x2="566.0" y2="150"/><line x1="527.8" y1="105" x2="572.8" y2="150"/><line x1="534.6" y1="105" x2="579.6" y2="150"/><line x1="541.4" y1="105" x2="586.4" y2="150"/><line x1="548.2" y1="105" x2="593.2" y2="150"/><line x1="555.0" y1="105" x2="600.0" y2="150"/><line x1="561.8" y1="105" x2="606.8" y2="150"/><line x1="568.6" y1="105" x2="613.6" y2="150"/><line x1="575.4" y1="105" x2="620.4" y2="150"/><line x1="582.2" y1="105" x2="627.2" y2="150"/><line x1="589.0" y1="105" x2="634.0" y2="150"/><line x1="595.8" y1="105" x2="640.8" y2="150"/><line x1="602.6" y1="105" x2="647.6" y2="150"/><line x1="609.4" y1="105" x2="654.4" y2="150"/><line x1="616.2" y1="105" x2="661.2" y2="150"/><line x1="623.0" y1="105" x2="668.0" y2="150"/><line x1="629.8" y1="105" x2="674.8" y2="150"/><line x1="636.6" y1="105" x2="681.6" y2="150"/><line x1="643.4" y1="105" x2="688.4" y2="150"/><line x1="650.2" y1="105" x2="695.2" y2="150"/><line x1="657.0" y1="105" x2="702.0" y2="150"/><line x1="663.8" y1="105" x2="708.8" y2="150"/><line x1="670.6" y1="105" x2="715.6" y2="150"/><line x1="677.4" y1="105" x2="722.4" y2="150"/><line x1="684.2" y1="105" x2="729.2" y2="150"/><line x1="691.0" y1="105" x2="736.0" y2="150"/><line x1="697.8" y1="105" x2="742.8" y2="150"/><line x1="704.6" y1="105" x2="749.6" y2="150"/><line x1="711.4" y1="105" x2="756.4" y2="150"/><line x1="718.2" y1="105" x2="763.2" y2="150"/><line x1="725.0" y1="105" x2="770.0" y2="150"/><line x1="731.8" y1="105" x2="776.8" y2="150"/><line x1="738.6" y1="105" x2="783.6" y2="150"/><line x1="745.4" y1="105" x2="790.4" y2="150"/><line x1="752.2" y1="105" x2="797.2" y2="150"/></g>
<rect x="432.7" y="145.7" width="1.2" height="1.2" fill="#d8d8d8"/>
<rect x="439.9" y="142.7" width="1.2" height="1.2" fill="#6fe0d8"/>
<rect x="442.4" y="140.2" width="1.2" height="1.2" fill="#d8d8d8"/>
<rect x="448.1" y="138.9" width="1.2" height="1.2" fill="#6fe0d8"/>
<rect x="453.9" y="138.9" width="1.2" height="1.2" fill="#d8d8d8"/>
<rect x="458.8" y="137.4" width="1.2" height="1.2" fill="#8fe8e0"/>
<rect x="464.6" y="135.6" width="1.2" height="1.2" fill="#6fe0d8"/>
<rect x="469.0" y="131.5" width="1.2" height="1.2" fill="#8fe8e0"/>
<rect x="473.4" y="133.3" width="1.2" height="1.2" fill="#8fe8e0"/>
<rect x="479.0" y="128.7" width="1.2" height="1.2" fill="#d8d8d8"/>
<rect x="484.6" y="129.5" width="1.2" height="1.2" fill="#d8d8d8"/>
<rect x="490.5" y="128.7" width="1.2" height="1.2" fill="#d8d8d8"/>
<rect x="495.6" y="126.4" width="1.2" height="1.2" fill="#8fe8e0"/>
<rect x="501.2" y="123.7" width="1.2" height="1.2" fill="#8fe8e0"/>
<rect x="505.2" y="123.4" width="1.2" height="1.2" fill="#6fe0d8"/>
<rect x="510.1" y="123.6" width="1.2" height="1.2" fill="#d8d8d8"/>
<rect x="515.2" y="123.4" width="1.2" height="1.2" fill="#6fe0d8"/>
<rect x="520.1" y="121.8" width="1.2" height="1.2" fill="#6fe0d8"/>
<rect x="524.8" y="120.3" width="1.2" height="1.2" fill="#8fe8e0"/>
<rect x="531.8" y="121.4" width="1.2" height="1.2" fill="#6fe0d8"/>
<rect x="536.5" y="119.9" width="1.2" height="1.2" fill="#d8d8d8"/>
<rect x="542.4" y="119.9" width="1.2" height="1.2" fill="#6fe0d8"/>
<rect x="544.9" y="118.8" width="1.2" height="1.2" fill="#6fe0d8"/>
<rect x="552.2" y="117.9" width="1.2" height="1.2" fill="#d8d8d8"/>
<rect x="555.2" y="117.4" width="1.2" height="1.2" fill="#6fe0d8"/>
<rect x="563.0" y="115.6" width="1.2" height="1.2" fill="#8fe8e0"/>
<rect x="566.3" y="115.6" width="1.2" height="1.2" fill="#d8d8d8"/>
<rect x="571.5" y="116.3" width="1.2" height="1.2" fill="#8fe8e0"/>
<rect x="575.4" y="116.8" width="1.2" height="1.2" fill="#8fe8e0"/>
<rect x="581.5" y="116.6" width="1.2" height="1.2" fill="#6fe0d8"/>
<rect x="588.2" y="117.8" width="1.2" height="1.2" fill="#6fe0d8"/>
<rect x="591.3" y="114.9" width="1.2" height="1.2" fill="#8fe8e0"/>
<rect x="596.0" y="116.8" width="1.2" height="1.2" fill="#8fe8e0"/>
<rect x="603.8" y="118.2" width="1.2" height="1.2" fill="#d8d8d8"/>
<rect x="607.8" y="115.8" width="1.2" height="1.2" fill="#8fe8e0"/>
<rect x="614.1" y="116.8" width="1.2" height="1.2" fill="#d8d8d8"/>
<rect x="619.1" y="118.9" width="1.2" height="1.2" fill="#d8d8d8"/>
<rect x="622.5" y="119.1" width="1.2" height="1.2" fill="#d8d8d8"/>
<rect x="628.4" y="118.8" width="1.2" height="1.2" fill="#6fe0d8"/>
<rect x="631.9" y="120.4" width="1.2" height="1.2" fill="#6fe0d8"/>
<rect x="637.5" y="120.0" width="1.2" height="1.2" fill="#6fe0d8"/>
<rect x="642.5" y="119.6" width="1.2" height="1.2" fill="#d8d8d8"/>
<rect x="648.5" y="121.3" width="1.2" height="1.2" fill="#8fe8e0"/>
<rect x="654.4" y="123.7" width="1.2" height="1.2" fill="#d8d8d8"/>
<rect x="657.2" y="122.9" width="1.2" height="1.2" fill="#6fe0d8"/>
<rect x="662.7" y="124.0" width="1.2" height="1.2" fill="#d8d8d8"/>
<rect x="668.8" y="125.4" width="1.2" height="1.2" fill="#d8d8d8"/>
<rect x="674.4" y="125.2" width="1.2" height="1.2" fill="#d8d8d8"/>
<rect x="677.7" y="125.3" width="1.2" height="1.2" fill="#6fe0d8"/>
<rect x="682.8" y="127.5" width="1.2" height="1.2" fill="#6fe0d8"/>
<rect x="689.2" y="129.8" width="1.2" height="1.2" fill="#d8d8d8"/>
<rect x="693.5" y="129.6" width="1.2" height="1.2" fill="#d8d8d8"/>
<rect x="700.7" y="131.9" width="1.2" height="1.2" fill="#d8d8d8"/>
<rect x="703.5" y="134.5" width="1.2" height="1.2" fill="#6fe0d8"/>
<rect x="710.4" y="134.4" width="1.2" height="1.2" fill="#6fe0d8"/>
<rect x="714.1" y="137.8" width="1.2" height="1.2" fill="#8fe8e0"/>
<rect x="719.5" y="139.2" width="1.2" height="1.2" fill="#6fe0d8"/>
<rect x="725.8" y="139.5" width="1.2" height="1.2" fill="#d8d8d8"/>
<rect x="731.7" y="143.6" width="1.2" height="1.2" fill="#8fe8e0"/>
<rect x="735.2" y="145.5" width="1.2" height="1.2" fill="#8fe8e0"/>
<clipPath id="hl1"><path d="M427.00 165.00 L435.00 165.00 L435.00 171.00 L427.00 171.00 Z"/></clipPath>
<clipPath id="hl2"><path d="M408.50 172.00 L435.00 172.00 L435.00 199.00 L408.50 199.00 Z"/></clipPath>
<clipPath id="hl3"><path d="M407.80 199.10 L435.40 199.10 L439.00 203.50 L443.30 207.50 L443.30 245.60 L433.80 245.60 L433.80 207.20 L407.80 207.20 Z"/></clipPath>
<rect x="410.5" y="207.5" width="11.0" height="1.0" stroke="#ffffff" fill="none" stroke-width="1"/>
<rect x="412.5" y="208.5" width="6.0" height="7.0" stroke="#ffffff" fill="none" stroke-width="1"/>
<line x1="412.20" y1="213.50" x2="419.00" y2="213.50" stroke="#ffffff" stroke-width="1" />
<clipPath id="hr1"><path d="M738.00 165.00 L746.50 165.00 L746.50 171.00 L738.00 171.00 Z"/></clipPath>
<clipPath id="hr2"><path d="M738.00 172.00 L748.00 172.00 L748.00 199.00 L738.00 199.00 Z"/></clipPath>
<rect x="748" y="171" width="2" height="29" fill="#fff"/>
<clipPath id="hr3"><path d="M736.80 199.10 L756.40 199.10 L753.50 203.90 L741.10 203.90 L736.80 208.70 L736.80 245.60 L727.70 245.60 L727.70 208.70 L732.00 204.90 Z"/></clipPath>
<path d="M736.80 199.60 L756.40 199.60 L753.50 203.90 L741.10 203.90 L736.80 208.70" stroke="#ffffff" fill="none" stroke-width="1"/>
<rect x="749.5" y="208.5" width="11.0" height="2.0" stroke="#ffffff" fill="#000" stroke-width="1"/>
<rect x="752.5" y="210.5" width="6.0" height="6.0" stroke="#ffffff" fill="#000" stroke-width="1"/>
<line x1="752.50" y1="213.50" x2="758.00" y2="213.50" stroke="#ffffff" stroke-width="1" />
<rect x="430" y="230" width="1" height="1" fill="#e06060"/>
<rect x="432" y="244" width="1" height="1" fill="#f0c0c0"/>
<rect x="432" y="236" width="1" height="1" fill="#ffffff"/>
<rect x="431" y="223" width="1" height="1" fill="#ffffff"/>
<rect x="426" y="233" width="1" height="1" fill="#d8d8d8"/>
<rect x="432" y="229" width="1" height="1" fill="#d8d8d8"/>
<rect x="430" y="225" width="1" height="1" fill="#ffffff"/>
<rect x="426" y="228" width="1" height="1" fill="#d8d8d8"/>
<rect x="428" y="227" width="1" height="1" fill="#d8d8d8"/>
<rect x="427" y="224" width="1" height="1" fill="#ffffff"/>
<rect x="430" y="241" width="1" height="1" fill="#d8d8d8"/>
<rect x="427" y="226" width="1" height="1" fill="#f0c0c0"/>
<rect x="432" y="222" width="1" height="1" fill="#ffffff"/>
<rect x="432" y="228" width="1" height="1" fill="#ffffff"/>
<rect x="432" y="227" width="1" height="1" fill="#e06060"/>
<rect x="428" y="228" width="1" height="1" fill="#ffffff"/>
<rect x="427" y="244" width="1" height="1" fill="#ffffff"/>
<rect x="426" y="233" width="1" height="1" fill="#d8d8d8"/>
<rect x="427" y="226" width="1" height="1" fill="#e06060"/>
<rect x="426" y="232" width="1" height="1" fill="#e06060"/>
<rect x="432" y="241" width="1" height="1" fill="#f0c0c0"/>
<rect x="430" y="243" width="1" height="1" fill="#e06060"/>
<rect x="426" y="231" width="1" height="1" fill="#e06060"/>
<rect x="432" y="231" width="1" height="1" fill="#d8d8d8"/>
<rect x="431" y="232" width="1" height="1" fill="#ffffff"/>
<rect x="431" y="227" width="1" height="1" fill="#f0c0c0"/>
<rect x="428" y="222" width="1" height="1" fill="#e06060"/>
<rect x="432" y="234" width="1" height="1" fill="#f0c0c0"/>
<rect x="430" y="235" width="1" height="1" fill="#e06060"/>
<rect x="432" y="222" width="1" height="1" fill="#d8d8d8"/>
<rect x="426" y="244" width="1" height="1" fill="#ffffff"/>
<rect x="744" y="228" width="1" height="1" fill="#f0c0c0"/>
<rect x="741" y="236" width="1" height="1" fill="#e06060"/>
<rect x="744" y="233" width="1" height="1" fill="#e06060"/>
<rect x="743" y="225" width="1" height="1" fill="#e06060"/>
<rect x="743" y="224" width="1" height="1" fill="#ffffff"/>
<rect x="744" y="233" width="1" height="1" fill="#ffffff"/>
<rect x="745" y="239" width="1" height="1" fill="#f0c0c0"/>
<rect x="741" y="224" width="1" height="1" fill="#ffffff"/>
<rect x="745" y="244" width="1" height="1" fill="#e06060"/>
<rect x="743" y="227" width="1" height="1" fill="#f0c0c0"/>
<rect x="740" y="241" width="1" height="1" fill="#d8d8d8"/>
<rect x="740" y="229" width="1" height="1" fill="#e06060"/>
<rect x="745" y="235" width="1" height="1" fill="#ffffff"/>
<rect x="740" y="242" width="1" height="1" fill="#f0c0c0"/>
<rect x="743" y="232" width="1" height="1" fill="#ffffff"/>
<rect x="741" y="240" width="1" height="1" fill="#ffffff"/>
<rect x="745" y="235" width="1" height="1" fill="#f0c0c0"/>
<rect x="741" y="235" width="1" height="1" fill="#e06060"/>
<rect x="741" y="223" width="1" height="1" fill="#d8d8d8"/>
<rect x="743" y="241" width="1" height="1" fill="#ffffff"/>
<rect x="744" y="236" width="1" height="1" fill="#d8d8d8"/>
<rect x="745" y="232" width="1" height="1" fill="#d8d8d8"/>
<rect x="743" y="234" width="1" height="1" fill="#ffffff"/>
<rect x="740" y="234" width="1" height="1" fill="#ffffff"/>
<rect x="745" y="237" width="1" height="1" fill="#e06060"/>
<rect x="741" y="224" width="1" height="1" fill="#d8d8d8"/>
<line x1="443.50" y1="185.50" x2="728.50" y2="185.50" stroke="#ffffff" stroke-width="1" />
<line x1="443.50" y1="185.00" x2="443.50" y2="208.00" stroke="#ffffff" stroke-width="1" />
<line x1="727.50" y1="185.00" x2="727.50" y2="209.00" stroke="#ffffff" stroke-width="1" />
<rect x="446.0" y="184" width="4" height="3" fill="#fff"/>
<rect x="721.0" y="184" width="4" height="3" fill="#fff"/>
<text transform="translate(584.5 185.0) scale(1 1.08)" font-size="12.6" text-anchor="middle" fill="#ececec" stroke="#ececec" stroke-width="0.25">9000</text>
<line x1="507.80" y1="214.50" x2="664.00" y2="214.50" stroke="#ffffff" stroke-width="1" />
<rect x="510.0" y="213" width="4" height="3" fill="#fff"/>
<rect x="657.0" y="213" width="4" height="3" fill="#fff"/>
<text transform="translate(584.8 214.6) scale(1 1.08)" font-size="12.6" text-anchor="middle" fill="#ececec" stroke="#ececec" stroke-width="0.25">4950</text>
<line x1="507.50" y1="205.40" x2="507.50" y2="214.50" stroke="#ffffff" stroke-width="1" />
<line x1="663.50" y1="205.40" x2="663.50" y2="214.50" stroke="#ffffff" stroke-width="1" />
<line x1="444.00" y1="243.50" x2="453.50" y2="243.50" stroke="#ffffff" stroke-width="1" />
<line x1="446.00" y1="244.50" x2="453.00" y2="244.50" stroke="#e8a0a0" stroke-width="1" />
<line x1="717.60" y1="243.50" x2="727.00" y2="243.50" stroke="#ffffff" stroke-width="1" />
<line x1="718.00" y1="244.50" x2="725.00" y2="244.50" stroke="#e8a0a0" stroke-width="1" />
<line x1="424.40" y1="273.50" x2="747.60" y2="273.50" stroke="#ffffff" stroke-width="1" />
<rect x="426" y="245" width="1" height="1" fill="#e86a6a"/>
<rect x="431" y="245" width="1" height="1" fill="#e86a6a"/>
<rect x="435" y="245" width="1" height="1" fill="#e86a6a"/>
<rect x="440" y="245" width="1" height="1" fill="#e86a6a"/>
<rect x="444" y="245" width="1" height="1" fill="#e86a6a"/>
<rect x="448" y="245" width="1" height="1" fill="#e86a6a"/>
<rect x="453" y="245" width="1" height="1" fill="#e86a6a"/>
<rect x="458" y="245" width="1" height="1" fill="#e86a6a"/>
<rect x="462" y="245" width="1" height="1" fill="#e86a6a"/>
<rect x="467" y="245" width="1" height="1" fill="#e86a6a"/>
<rect x="471" y="245" width="1" height="1" fill="#e86a6a"/>
<rect x="475" y="245" width="1" height="1" fill="#e86a6a"/>
<rect x="480" y="245" width="1" height="1" fill="#e86a6a"/>
<rect x="484" y="245" width="1" height="1" fill="#e86a6a"/>
<rect x="489" y="245" width="1" height="1" fill="#e86a6a"/>
<rect x="494" y="245" width="1" height="1" fill="#e86a6a"/>
<rect x="498" y="245" width="1" height="1" fill="#e86a6a"/>
<rect x="502" y="245" width="1" height="1" fill="#e86a6a"/>
<rect x="507" y="245" width="1" height="1" fill="#e86a6a"/>
<rect x="511" y="245" width="1" height="1" fill="#e86a6a"/>
<rect x="515" y="245" width="1" height="1" fill="#e86a6a"/>
<rect x="520" y="245" width="1" height="1" fill="#e86a6a"/>
<rect x="525" y="245" width="1" height="1" fill="#e86a6a"/>
<rect x="529" y="245" width="1" height="1" fill="#e86a6a"/>
<rect x="534" y="245" width="1" height="1" fill="#e86a6a"/>
<rect x="538" y="245" width="1" height="1" fill="#e86a6a"/>
<rect x="542" y="245" width="1" height="1" fill="#e86a6a"/>
<rect x="547" y="245" width="1" height="1" fill="#e86a6a"/>
<rect x="552" y="245" width="1" height="1" fill="#e86a6a"/>
<rect x="556" y="245" width="1" height="1" fill="#e86a6a"/>
<rect x="561" y="245" width="1" height="1" fill="#e86a6a"/>
<rect x="565" y="245" width="1" height="1" fill="#e86a6a"/>
<rect x="569" y="245" width="1" height="1" fill="#e86a6a"/>
<rect x="574" y="245" width="1" height="1" fill="#e86a6a"/>
<rect x="578" y="245" width="1" height="1" fill="#e86a6a"/>
<rect x="583" y="245" width="1" height="1" fill="#e86a6a"/>
<rect x="588" y="245" width="1" height="1" fill="#e86a6a"/>
<rect x="592" y="245" width="1" height="1" fill="#e86a6a"/>
<rect x="596" y="245" width="1" height="1" fill="#e86a6a"/>
<rect x="601" y="245" width="1" height="1" fill="#e86a6a"/>
<rect x="605" y="245" width="1" height="1" fill="#e86a6a"/>
<rect x="609" y="245" width="1" height="1" fill="#e86a6a"/>
<rect x="614" y="245" width="1" height="1" fill="#e86a6a"/>
<rect x="619" y="245" width="1" height="1" fill="#e86a6a"/>
<rect x="623" y="245" width="1" height="1" fill="#e86a6a"/>
<rect x="628" y="245" width="1" height="1" fill="#e86a6a"/>
<rect x="632" y="245" width="1" height="1" fill="#e86a6a"/>
<rect x="636" y="245" width="1" height="1" fill="#e86a6a"/>
<rect x="641" y="245" width="1" height="1" fill="#e86a6a"/>
<rect x="646" y="245" width="1" height="1" fill="#e86a6a"/>
<rect x="650" y="245" width="1" height="1" fill="#e86a6a"/>
<rect x="655" y="245" width="1" height="1" fill="#e86a6a"/>
<rect x="659" y="245" width="1" height="1" fill="#e86a6a"/>
<rect x="663" y="245" width="1" height="1" fill="#e86a6a"/>
<rect x="668" y="245" width="1" height="1" fill="#e86a6a"/>
<rect x="672" y="245" width="1" height="1" fill="#e86a6a"/>
<rect x="677" y="245" width="1" height="1" fill="#e86a6a"/>
<rect x="681" y="245" width="1" height="1" fill="#e86a6a"/>
<rect x="686" y="245" width="1" height="1" fill="#e86a6a"/>
<rect x="690" y="245" width="1" height="1" fill="#e86a6a"/>
<rect x="695" y="245" width="1" height="1" fill="#e86a6a"/>
<rect x="699" y="245" width="1" height="1" fill="#e86a6a"/>
<rect x="703" y="245" width="1" height="1" fill="#e86a6a"/>
<rect x="708" y="245" width="1" height="1" fill="#e86a6a"/>
<rect x="713" y="245" width="1" height="1" fill="#e86a6a"/>
<rect x="717" y="245" width="1" height="1" fill="#e86a6a"/>
<rect x="722" y="245" width="1" height="1" fill="#e86a6a"/>
<rect x="726" y="245" width="1" height="1" fill="#e86a6a"/>
<rect x="730" y="245" width="1" height="1" fill="#e86a6a"/>
<rect x="735" y="245" width="1" height="1" fill="#e86a6a"/>
<rect x="739" y="245" width="1" height="1" fill="#e86a6a"/>
<rect x="744" y="245" width="1" height="1" fill="#e86a6a"/>
<line x1="412.30" y1="281.50" x2="760.60" y2="281.50" stroke="#ffffff" stroke-width="1" />
<line x1="412.30" y1="291.50" x2="760.60" y2="291.50" stroke="#ffffff" stroke-width="1" />
<line x1="413.50" y1="281.40" x2="413.50" y2="291.50" stroke="#ffffff" stroke-width="1" />
<line x1="758.50" y1="281.40" x2="758.50" y2="291.50" stroke="#ffffff" stroke-width="1" />
<line x1="412.50" y1="281.40" x2="412.50" y2="291.50" stroke="#ffffff" stroke-width="1" />
<line x1="760.50" y1="281.40" x2="760.50" y2="291.50" stroke="#ffffff" stroke-width="1" />
<line x1="463.50" y1="274.00" x2="463.50" y2="297.50" stroke="#ffffff" stroke-width="1" />
<rect x="459" y="282" width="9" height="9" fill="#000"/>
<rect x="458.5" y="281.5" width="10.0" height="9.0" stroke="#ffffff" fill="none" stroke-width="1"/>
<rect x="460" y="283" width="7" height="2" fill="#fff"/>
<line x1="458.00" y1="286.50" x2="468.00" y2="286.50" stroke="#ffffff" stroke-width="1" />
<rect x="460.15" y="287" width="0.8" height="4" fill="#fff" shape-rendering="geometricPrecision"/>
<rect x="461.65" y="287" width="0.8" height="4" fill="#fff" shape-rendering="geometricPrecision"/>
<rect x="465.15" y="287" width="0.8" height="4" fill="#fff" shape-rendering="geometricPrecision"/>
<rect x="466.65" y="287" width="0.8" height="4" fill="#fff" shape-rendering="geometricPrecision"/>
<line x1="463.50" y1="281.00" x2="463.50" y2="291.00" stroke="#ffffff" stroke-width="1" />
<line x1="460.00" y1="295.50" x2="467.00" y2="295.50" stroke="#ffffff" stroke-width="1" />
<line x1="460.50" y1="295.50" x2="460.50" y2="297.50" stroke="#ffffff" stroke-width="1" />
<line x1="466.50" y1="295.50" x2="466.50" y2="297.50" stroke="#ffffff" stroke-width="1" />
<line x1="504.50" y1="274.00" x2="504.50" y2="297.50" stroke="#ffffff" stroke-width="1" />
<rect x="500" y="282" width="9" height="9" fill="#000"/>
<rect x="499.5" y="281.5" width="10.0" height="9.0" stroke="#ffffff" fill="none" stroke-width="1"/>
<rect x="501" y="283" width="7" height="2" fill="#fff"/>
<line x1="499.00" y1="286.50" x2="509.00" y2="286.50" stroke="#ffffff" stroke-width="1" />
<rect x="501.15" y="287" width="0.8" height="4" fill="#fff" shape-rendering="geometricPrecision"/>
<rect x="502.65" y="287" width="0.8" height="4" fill="#fff" shape-rendering="geometricPrecision"/>
<rect x="506.15" y="287" width="0.8" height="4" fill="#fff" shape-rendering="geometricPrecision"/>
<rect x="507.65" y="287" width="0.8" height="4" fill="#fff" shape-rendering="geometricPrecision"/>
<line x1="504.50" y1="281.00" x2="504.50" y2="291.00" stroke="#ffffff" stroke-width="1" />
<line x1="501.00" y1="295.50" x2="508.00" y2="295.50" stroke="#ffffff" stroke-width="1" />
<line x1="501.50" y1="295.50" x2="501.50" y2="297.50" stroke="#ffffff" stroke-width="1" />
<line x1="507.50" y1="295.50" x2="507.50" y2="297.50" stroke="#ffffff" stroke-width="1" />
<line x1="544.50" y1="274.00" x2="544.50" y2="297.50" stroke="#ffffff" stroke-width="1" />
<rect x="540" y="282" width="9" height="9" fill="#000"/>
<rect x="539.5" y="281.5" width="10.0" height="9.0" stroke="#ffffff" fill="none" stroke-width="1"/>
<rect x="541" y="283" width="7" height="2" fill="#fff"/>
<line x1="539.00" y1="286.50" x2="549.00" y2="286.50" stroke="#ffffff" stroke-width="1" />
<rect x="541.15" y="287" width="0.8" height="4" fill="#fff" shape-rendering="geometricPrecision"/>
<rect x="542.65" y="287" width="0.8" height="4" fill="#fff" shape-rendering="geometricPrecision"/>
<rect x="546.15" y="287" width="0.8" height="4" fill="#fff" shape-rendering="geometricPrecision"/>
<rect x="547.65" y="287" width="0.8" height="4" fill="#fff" shape-rendering="geometricPrecision"/>
<line x1="544.50" y1="281.00" x2="544.50" y2="291.00" stroke="#ffffff" stroke-width="1" />
<line x1="541.00" y1="295.50" x2="548.00" y2="295.50" stroke="#ffffff" stroke-width="1" />
<line x1="541.50" y1="295.50" x2="541.50" y2="297.50" stroke="#ffffff" stroke-width="1" />
<line x1="547.50" y1="295.50" x2="547.50" y2="297.50" stroke="#ffffff" stroke-width="1" />
<line x1="585.50" y1="274.00" x2="585.50" y2="297.50" stroke="#ffffff" stroke-width="1" />
<rect x="581" y="282" width="9" height="9" fill="#000"/>
<rect x="580.5" y="281.5" width="10.0" height="9.0" stroke="#ffffff" fill="none" stroke-width="1"/>
<rect x="582" y="283" width="7" height="2" fill="#fff"/>
<line x1="580.00" y1="286.50" x2="590.00" y2="286.50" stroke="#ffffff" stroke-width="1" />
<rect x="582.15" y="287" width="0.8" height="4" fill="#fff" shape-rendering="geometricPrecision"/>
<rect x="583.65" y="287" width="0.8" height="4" fill="#fff" shape-rendering="geometricPrecision"/>
<rect x="587.15" y="287" width="0.8" height="4" fill="#fff" shape-rendering="geometricPrecision"/>
<rect x="588.65" y="287" width="0.8" height="4" fill="#fff" shape-rendering="geometricPrecision"/>
<line x1="585.50" y1="281.00" x2="585.50" y2="291.00" stroke="#ffffff" stroke-width="1" />
<line x1="582.00" y1="295.50" x2="589.00" y2="295.50" stroke="#ffffff" stroke-width="1" />
<line x1="582.50" y1="295.50" x2="582.50" y2="297.50" stroke="#ffffff" stroke-width="1" />
<line x1="588.50" y1="295.50" x2="588.50" y2="297.50" stroke="#ffffff" stroke-width="1" />
<line x1="626.50" y1="274.00" x2="626.50" y2="297.50" stroke="#ffffff" stroke-width="1" />
<rect x="622" y="282" width="9" height="9" fill="#000"/>
<rect x="621.5" y="281.5" width="10.0" height="9.0" stroke="#ffffff" fill="none" stroke-width="1"/>
<rect x="623" y="283" width="7" height="2" fill="#fff"/>
<line x1="621.00" y1="286.50" x2="631.00" y2="286.50" stroke="#ffffff" stroke-width="1" />
<rect x="623.15" y="287" width="0.8" height="4" fill="#fff" shape-rendering="geometricPrecision"/>
<rect x="624.65" y="287" width="0.8" height="4" fill="#fff" shape-rendering="geometricPrecision"/>
<rect x="628.15" y="287" width="0.8" height="4" fill="#fff" shape-rendering="geometricPrecision"/>
<rect x="629.65" y="287" width="0.8" height="4" fill="#fff" shape-rendering="geometricPrecision"/>
<line x1="626.50" y1="281.00" x2="626.50" y2="291.00" stroke="#ffffff" stroke-width="1" />
<line x1="623.00" y1="295.50" x2="630.00" y2="295.50" stroke="#ffffff" stroke-width="1" />
<line x1="623.50" y1="295.50" x2="623.50" y2="297.50" stroke="#ffffff" stroke-width="1" />
<line x1="629.50" y1="295.50" x2="629.50" y2="297.50" stroke="#ffffff" stroke-width="1" />
<line x1="666.50" y1="274.00" x2="666.50" y2="297.50" stroke="#ffffff" stroke-width="1" />
<rect x="662" y="282" width="9" height="9" fill="#000"/>
<rect x="661.5" y="281.5" width="10.0" height="9.0" stroke="#ffffff" fill="none" stroke-width="1"/>
<rect x="663" y="283" width="7" height="2" fill="#fff"/>
<line x1="661.00" y1="286.50" x2="671.00" y2="286.50" stroke="#ffffff" stroke-width="1" />
<rect x="663.15" y="287" width="0.8" height="4" fill="#fff" shape-rendering="geometricPrecision"/>
<rect x="664.65" y="287" width="0.8" height="4" fill="#fff" shape-rendering="geometricPrecision"/>
<rect x="668.15" y="287" width="0.8" height="4" fill="#fff" shape-rendering="geometricPrecision"/>
<rect x="669.65" y="287" width="0.8" height="4" fill="#fff" shape-rendering="geometricPrecision"/>
<line x1="666.50" y1="281.00" x2="666.50" y2="291.00" stroke="#ffffff" stroke-width="1" />
<line x1="663.00" y1="295.50" x2="670.00" y2="295.50" stroke="#ffffff" stroke-width="1" />
<line x1="663.50" y1="295.50" x2="663.50" y2="297.50" stroke="#ffffff" stroke-width="1" />
<line x1="669.50" y1="295.50" x2="669.50" y2="297.50" stroke="#ffffff" stroke-width="1" />
<line x1="707.50" y1="274.00" x2="707.50" y2="297.50" stroke="#ffffff" stroke-width="1" />
<rect x="703" y="282" width="9" height="9" fill="#000"/>
<rect x="702.5" y="281.5" width="10.0" height="9.0" stroke="#ffffff" fill="none" stroke-width="1"/>
<rect x="704" y="283" width="7" height="2" fill="#fff"/>
<line x1="702.00" y1="286.50" x2="712.00" y2="286.50" stroke="#ffffff" stroke-width="1" />
<rect x="704.15" y="287" width="0.8" height="4" fill="#fff" shape-rendering="geometricPrecision"/>
<rect x="705.65" y="287" width="0.8" height="4" fill="#fff" shape-rendering="geometricPrecision"/>
<rect x="709.15" y="287" width="0.8" height="4" fill="#fff" shape-rendering="geometricPrecision"/>
<rect x="710.65" y="287" width="0.8" height="4" fill="#fff" shape-rendering="geometricPrecision"/>
<line x1="707.50" y1="281.00" x2="707.50" y2="291.00" stroke="#ffffff" stroke-width="1" />
<line x1="704.00" y1="295.50" x2="711.00" y2="295.50" stroke="#ffffff" stroke-width="1" />
<line x1="704.50" y1="295.50" x2="704.50" y2="297.50" stroke="#ffffff" stroke-width="1" />
<line x1="710.50" y1="295.50" x2="710.50" y2="297.50" stroke="#ffffff" stroke-width="1" />
<line x1="414.60" y1="324.50" x2="503.70" y2="324.50" stroke="#ffffff" stroke-width="1" />
<line x1="414.60" y1="330.50" x2="503.70" y2="330.50" stroke="#ffffff" stroke-width="1" />
<line x1="523.70" y1="324.50" x2="648.30" y2="324.50" stroke="#ffffff" stroke-width="1" />
<line x1="523.70" y1="330.50" x2="648.30" y2="330.50" stroke="#ffffff" stroke-width="1" />
<line x1="668.30" y1="324.50" x2="757.40" y2="324.50" stroke="#ffffff" stroke-width="1" />
<line x1="668.30" y1="330.50" x2="757.40" y2="330.50" stroke="#ffffff" stroke-width="1" />
<line x1="374.70" y1="336.50" x2="796.00" y2="336.50" stroke="#ffffff" stroke-width="1" />
<line x1="403.50" y1="327.60" x2="403.50" y2="360.80" stroke="#ffffff" stroke-width="1" />
<line x1="512.50" y1="327.60" x2="512.50" y2="360.80" stroke="#ffffff" stroke-width="1" />
<line x1="658.50" y1="327.60" x2="658.50" y2="360.80" stroke="#ffffff" stroke-width="1" />
<line x1="766.50" y1="327.60" x2="766.50" y2="360.80" stroke="#ffffff" stroke-width="1" />
<line x1="403.70" y1="360.50" x2="767.80" y2="360.50" stroke="#ffffff" stroke-width="1" />
<rect x="406.7" y="359" width="4" height="3" fill="#fff"/>
<rect x="505.6" y="359" width="4" height="3" fill="#fff"/>
<rect x="515.6" y="359" width="4" height="3" fill="#fff"/>
<rect x="651.4" y="359" width="4" height="3" fill="#fff"/>
<rect x="661.4" y="359" width="4" height="3" fill="#fff"/>
<rect x="760.3" y="359" width="4" height="3" fill="#fff"/>
<text transform="translate(457.5 359.8) scale(1 1.08)" font-size="12.6" text-anchor="middle" fill="#ececec" stroke="#ececec" stroke-width="0.25">3450</text>
<text transform="translate(585.3 359.8) scale(1 1.08)" font-size="12.6" text-anchor="middle" fill="#ececec" stroke="#ececec" stroke-width="0.25">4600</text>
<text transform="translate(712.5 359.8) scale(1 1.08)" font-size="12.6" text-anchor="middle" fill="#ececec" stroke="#ececec" stroke-width="0.25">3450</text>
<line x1="378.50" y1="321.40" x2="378.50" y2="420.00" stroke="#ffffff" stroke-width="1" />
<line x1="767.50" y1="360.00" x2="767.50" y2="387.00" stroke="#ffffff" stroke-width="1" />
<line x1="792.50" y1="321.40" x2="792.50" y2="420.00" stroke="#ffffff" stroke-width="1" />
<line x1="378.80" y1="386.50" x2="767.80" y2="386.50" stroke="#ffffff" stroke-width="1" />
<rect x="381.0" y="385" width="4" height="3" fill="#fff"/>
<rect x="761.0" y="385" width="4" height="3" fill="#fff"/>
<text transform="translate(572.3 386) scale(1 1.08)" font-size="12.6" text-anchor="middle" fill="#ececec" stroke="#ececec" stroke-width="0.25">12300</text>
<line x1="378.80" y1="419.50" x2="793.30" y2="419.50" stroke="#ffffff" stroke-width="1" />
<rect x="381.0" y="418" width="4" height="3" fill="#fff"/>
<rect x="786.5" y="418" width="4" height="3" fill="#fff"/>
<text transform="translate(584 418.8) scale(1 1.08)" font-size="12.6" text-anchor="middle" fill="#ececec" stroke="#ececec" stroke-width="0.25">13100</text>
<line x1="830.50" y1="431.00" x2="830.50" y2="493.00" stroke="#ffffff" stroke-width="1" />
<line x1="861.50" y1="431.00" x2="861.50" y2="462.00" stroke="#ffffff" stroke-width="1" />
<line x1="909.50" y1="431.00" x2="909.50" y2="462.00" stroke="#ffffff" stroke-width="1" />
<line x1="830.50" y1="446.50" x2="941.00" y2="446.50" stroke="#ffffff" stroke-width="1" />
<line x1="719.30" y1="462.50" x2="941.00" y2="462.50" stroke="#ffffff" stroke-width="1" />
<line x1="719.30" y1="477.50" x2="831.00" y2="477.50" stroke="#ffffff" stroke-width="1" />
<line x1="751.50" y1="462.00" x2="751.50" y2="493.00" stroke="#ffffff" stroke-width="1" />
<line x1="798.50" y1="462.00" x2="798.50" y2="493.00" stroke="#ffffff" stroke-width="1" />
<text transform="translate(774.9 455.3) scale(1 1.3)" font-size="14.7" text-anchor="middle" fill="#fff" font-weight="600" style="font-family:'Liberation Serif','Noto Serif CJK SC',serif;letter-spacing:0">冷却部截面图</text>
<text transform="translate(845.4 443.6) scale(1 1.28)" font-size="9.2" text-anchor="middle" fill="#fff" font-weight="900" style="font-family:'Liberation Serif','Noto Serif CJK SC',serif;letter-spacing:0">比例</text>
<text transform="translate(845.4 459.2) scale(1 1.28)" font-size="9.2" text-anchor="middle" fill="#fff" font-weight="900" style="font-family:'Liberation Serif','Noto Serif CJK SC',serif;letter-spacing:0">学号</text>
<text transform="translate(733.7 475.8) scale(1 1.28)" font-size="9.2" text-anchor="middle" fill="#fff" font-weight="900" style="font-family:'Liberation Serif','Noto Serif CJK SC',serif;letter-spacing:0">制图</text>
<text transform="translate(733.7 490.8) scale(1 1.28)" font-size="9.2" text-anchor="middle" fill="#fff" font-weight="900" style="font-family:'Liberation Serif','Noto Serif CJK SC',serif;letter-spacing:0">校核</text>
<text x="882.5" y="443" font-size="8" text-anchor="middle" fill="#f0f0f0" font-style="italic" style="font-family:'Liberation Serif',serif">1:50</text>
<line x1="647.00" y1="170.50" x2="715.50" y2="170.50" stroke="#ffffff" stroke-width="1" />
<line x1="681.50" y1="136.30" x2="681.50" y2="204.00" stroke="#ffffff" stroke-width="1" />
<rect x="678.5" y="167.5" width="6.0" height="6.0" stroke="#ffffff" fill="none" stroke-width="1"/>
<line x1="0.00" y1="492.50" x2="49.50" y2="492.50" stroke="#ffffff" stroke-width="1" />
<rect x="-0.5" y="487.5" width="5.0" height="8.0" stroke="#ffffff" fill="none" stroke-width="1"/>
<path d="M53.50 477.80 L65.50 490.30" stroke="#ffffff" fill="none" stroke-width="1"/>
<path d="M65.50 477.80 L53.50 490.30" stroke="#ffffff" fill="none" stroke-width="1"/>
<path d="M0.00 424.50 L6.20 430.50 L12.50 424.50" stroke="#ffffff" fill="none" stroke-width="1"/>
<line x1="6.50" y1="430.50" x2="6.50" y2="437.00" stroke="#ffffff" stroke-width="1" />
</svg>
<div id="top">
 <div class="tb" style="left:0;width:183px"></div>
 <div class="combo" style="left:0;width:137px"><span style="left:-1px;font-size:12.5px;word-spacing:-1.5px">CAD 经典</span></div>
 <div class="tb" style="left:193.500px;width:391px"></div>
 <div class="combo" style="left:217px;width:298px"><span style="left:85px;top:3px;font-size:12.2px">细实线</span></div>
 <div class="tb" style="left:596px;width:360px"></div>
 <div class="combo" style="left:596px;width:150px"><span class="mono" style="left:19px">ByLayer</span></div>
 <div class="combo" style="left:752px;width:159px"><span class="mono" style="left:69.500px">ByLayer</span></div>
 <div class="combo" style="left:918px;width:38px"></div>
 <svg class="ic" width="956" height="22" viewBox="0 0 956 22">
  <g fill="none" stroke="#555" stroke-width="1.3">
   <path d="M127.5 9 l3.2 3.4 l3.4 -3.6"/>
   <path d="M506.5 9 l3.2 3.4 l3.4 -3.6"/>
   <path d="M735.5 9 l3.2 3.4 l3.4 -3.6"/>
   <path d="M900.5 9 l3.2 3.4 l3.4 -3.6"/>
  </g>
  <!-- gear -->
  <g fill="none" stroke="#555" stroke-width="1.2">
   <circle cx="149" cy="11" r="2.6"/>
   <path d="M147.6 3.8h2.8l.5 1.9 1.7.7 1.7-1 2 2-1 1.7.7 1.7 1.9.5v2.8l-1.9.5-.7 1.7 1 1.7-2 2-1.7-1-1.7.7-.5 1.9h-2.8l-.5-1.9-1.7-.7-1.7 1-2-2 1-1.7-.7-1.700-1.900-.5v-2.8l1.900-.5.700-1.700-1-1.700 2-2 1.700 1 1.700-.7z" transform="translate(149 11) scale(0.84) translate(-149 -11.2)"/>
  </g>
  <!-- workspace house -->
  <g fill="none" stroke="#555" stroke-width="1">
   <rect x="165.500" y="4.500" width="13" height="13" stroke-dasharray="2 1.500"/>
   <path d="M167.500 16.500v-7l4.500-4 5 4.500v6.500z" fill="#9aa2ae" stroke="#444"/><path d="M167.500 9.500v-3h2v1.500" stroke="#444"/>
  </g>
  <!-- layer props -->
  <g fill="none" stroke="#333" stroke-width="1.1">
   <path d="M198 8.200l3.500-4.500h8"/>
   <path d="M198 8.200h6.500M198.500 11.300h5.500M198 14.400h6.500"/>
   <path d="M206 6.500l3-2.200M209.500 4.200l-0.500 2"/>
   <rect x="205.700" y="9.500" width="6.800" height="8.800" rx="1" fill="#f6f8fc" stroke="#2e3e50" stroke-width="1.200"/>
   <path d="M207.500 11.800h3.200" stroke="#46c" stroke-width="1.300"/><path d="M207.500 15h3.200M209.600 13.800l1.200 1.200-1.200 1.200" stroke="#35a" stroke-width="0.900"/>
  </g>
  <!-- bulb -->
  <g>
   <path d="M226.600 12.600v-1.200a4.500 4.500 0 1 1 3 0v1.200z" fill="#f8ee9c" stroke="#8a8470" stroke-width="0.900"/>
   <rect x="226.600" y="12.600" width="3" height="3.900" rx="0.800" fill="#fff" stroke="#2c3444" stroke-width="1"/>
  </g>
  <!-- sun -->
  <g stroke="#5a5a50" stroke-width="1">
   <circle cx="243.600" cy="9.800" r="4.200" fill="#f8ee9c" stroke="#8a8470"/>
   <path d="M243.600 3v1.600M243.600 15v1.600M236.800 9.800h1.600M248.800 9.800h1.600M238.800 5l1.100 1.100M247.300 13.500l1.100 1.100M238.800 14.600l1.100-1.100M247.300 6.100l1.100-1.100"/>
  </g>
  <!-- gray vp freeze -->
  <g fill="none" stroke="#b4b4b4" stroke-width="1">
   <rect x="255.500" y="4.500" width="7" height="7"/><rect x="257.500" y="6.500" width="3" height="3"/>
   <circle cx="263" cy="13" r="2.600" fill="#c8c8c8"/>
  </g>
  <!-- lock -->
  <g>
   <path d="M278.500 9.500v-2.500a2.600 2.600 0 0 1 5.200 0" fill="none" stroke="#3a78b8" stroke-width="1.400"/>
   <rect x="272.500" y="9.500" width="8" height="7" fill="#9cc8ee" stroke="#2a66a6" stroke-width="1"/>
   <rect x="276" y="11.500" width="1" height="3" fill="#124"/>
  </g>
  <rect x="288.500" y="6.500" width="9" height="9" fill="#fff" stroke="#222" stroke-width="1"/>
  <!-- layer icons right -->
  <g stroke-linejoin="round">
<path d="M527.0 11.5H536.0L529.5 16.5H520.5Z" fill="#fff" stroke="#1c2430" stroke-width="1"/>
<path d="M527.0 8.5H536.0L529.5 13.5H520.5Z" fill="#fff" stroke="#1c2430" stroke-width="1"/>
<path d="M527.0 5.5H536.0L529.5 10.5H520.5Z" fill="#a9d5f5" stroke="#2468b8" stroke-width="1"/>
<circle cx="528.300" cy="5.800" r="2.300" fill="#cfe8fb" stroke="#2468b8" stroke-width="1"/>
<path d="M551.5 14.3H558.5L554.0 18.3H547Z" fill="#fff" stroke="#222" stroke-width="1"/>
<path d="M551.5 10.9H558.5L554.0 14.9H547Z" fill="#fff" stroke="#222" stroke-width="1"/>
<path d="M551.5 7.5H558.5L554.0 11.5H547Z" fill="#fff" stroke="#222" stroke-width="1"/>
<path d="M551.500 7.500q-0.500-2-3-2h-3.500M546.800 3.700l-2 1.800 2 1.800" fill="none" stroke="#111" stroke-width="1.200"/>
<path d="M571.5 10.7H578.5L573.5 14.7H566.5Z" fill="#fff" stroke="#222" stroke-width="1"/>
<path d="M571.5 7.1H578.5L573.5 11.1H566.5Z" fill="#fff" stroke="#222" stroke-width="1"/>
<path d="M571.5 3.5H578.5L573.5 7.5H566.5Z" fill="#fff" stroke="#222" stroke-width="1"/>
<rect x="573.500" y="11.500" width="8.500" height="7" rx="0.800" fill="#f4f6fa" stroke="#1c2430" stroke-width="1.200"/>
<path d="M573.500 13h8.500" stroke="#1c2430" stroke-width="1.600"/><path d="M575.200 15.300h1.300M577.500 15.300h3M575.200 17h1.300M577.500 17h3" stroke="#445" stroke-width="0.900"/>
  </g>
  <rect x="602.500" y="6.500" width="9" height="9" fill="#fff" stroke="#222" stroke-width="1"/>
  <path d="M756 11.500h60.500M923 11.500h33" stroke="#111" stroke-width="1"/>
  <g stroke-width="1">
   <path d="M747.500 1v20M749.500 1v20M913.500 1v20M915.500 1v20" stroke="#a8a8a8"/>
   <path d="M748.500 1v20M750.500 1v20M914.500 1v20M916.500 1v20" stroke="#fdfdfd"/>
  </g>
 </svg>
 <div class="gl" style="left:185px"></div><div class="gl" style="left:585.500px;width:1.200px"></div>
 <div class="band1"></div><div class="band2"></div>
</div>
<div id="bot">
 <svg class="ic" width="956" height="18" viewBox="0 0 956 18">
  <rect x="0" y="0" width="42" height="14" fill="#f2f2f2"/>
  <g fill="#8a8a8a"><path d="M10.500 2.500v9l-6-4.500z"/><path d="M16.500 2.500v9l6-4.500z"/><path d="M30.500 2.500v9l6-4.500z"/><rect x="36.500" y="2.500" width="1.500" height="9"/></g>
  <g stroke="#c4c4c4"><path d="M13.500 0v14M27.500 0v14M40.500 0v14"/></g>
  <path d="M42 0h45.500l-4.500 14h-36.500z" fill="#000"/>
  <path d="M87.500 0h43.500l-4.500 14h-43.500z" fill="#f8f8f8" stroke="#555" stroke-width="0.800"/>
  <path d="M131 0h47l-4.500 14h-47z" fill="#f8f8f8" stroke="#555" stroke-width="0.800"/>
  <rect x="819" y="1" width="5" height="13" fill="#c2c2c2"/>
  <rect x="826" y="0" width="130" height="14" fill="#f1f1f1"/>
  <path d="M835 3.500l-4 4 4 4" fill="none" stroke="#444" stroke-width="1.800"/>
 </svg>
 <div class="tab" style="left:52px;color:#fff;font-weight:700;">模型</div>
 <div class="tab" style="left:92.500px;color:#111;letter-spacing:-0.3px">布局1</div>
 <div class="tab" style="left:138px;color:#111;letter-spacing:-0.3px">布局2</div>
 <div class="ln"></div><div class="ln2"></div>
</div>
</body></html>
